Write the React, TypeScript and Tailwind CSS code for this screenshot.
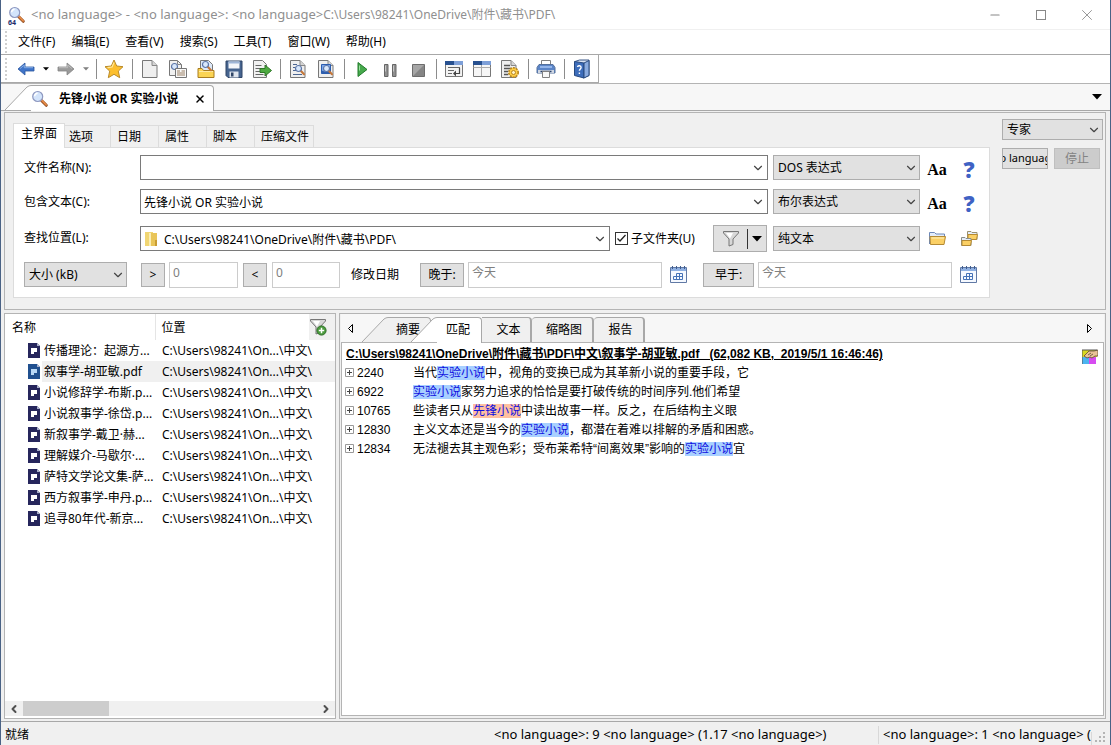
import type { ReactNode } from "react";
import { ChevronDown, ChevronLeft, ChevronRight, Minus, Square, X } from "lucide-react";

const RESULTS = [
  "传播理论：起源方...",
  "叙事学-胡亚敏.pdf",
  "小说修辞学-布斯.p...",
  "小说叙事学-徐岱.p...",
  "新叙事学-戴卫·赫...",
  "理解媒介-马歇尔·...",
  "萨特文学论文集-萨...",
  "西方叙事学-申丹.p...",
  "追寻80年代-新京...",
];

const MATCHES = [
  { line: 2240, before: "当代", hit: "实验小说", after: "中，视角的变换已成为其革新小说的重要手段，它" },
  { line: 6922, before: "", hit: "实验小说", after: "家努力追求的恰恰是要打破传统的时间序列.他们希望" },
  { line: 10765, before: "些读者只从", hit: "先锋小说", after: "中读出故事一样。反之，在后结构主义眼", alt: true },
  { line: 12830, before: "主义文本还是当今的", hit: "实验小说", after: "，都潜在着难以排解的矛盾和困惑。" },
  { line: 12834, before: "无法褪去其主观色彩；受布莱希特“间离效果”影响的", hit: "实验小说", after: "宜" },
];

const MENUS = ["文件(F)", "编辑(E)", "查看(V)", "搜索(S)", "工具(T)", "窗口(W)", "帮助(H)"];

type IconProps = { className?: string };

function Magnifier({ className = "" }: IconProps) {
  return (
    <svg viewBox="0 0 18 18" className={`h-[18px] w-[18px] ${className}`} aria-hidden="true">
      <path d="M10.5 10.5l4.8 4.8" stroke="#8e4a20" strokeWidth="3" strokeLinecap="round" />
      <path d="M10.8 10.4l4.4 4.4" stroke="#e58a45" strokeWidth="1.8" strokeLinecap="round" />
      <circle cx="6.7" cy="6.5" r="5" fill="#d3e4fb" stroke="#8e98c0" strokeWidth="1.2" />
      <path d="M3.6 6.2a3.2 3.2 0 0 1 3-2.9" stroke="#fff" strokeWidth="1.4" fill="none" />
    </svg>
  );
}

function Arrow({ flip, gray }: { flip?: boolean; gray?: boolean }) {
  return (
    <svg viewBox="0 0 18 14" className={flip ? "h-[14px] w-[18px] -scale-x-100" : "h-[14px] w-[18px]"} aria-hidden="true">
      <path d="M1 7l7-6v4h9v4H8v4z" fill={gray ? "#9a9a9a" : "#3f74c8"} stroke={gray ? "#858585" : "#2a569f"} strokeWidth=".8" strokeLinejoin="round" />
      <path d="M3 6.6l4.3-3.5v2.6H16" stroke={gray ? "#bcbcbc" : "#86aee6"} fill="none" />
    </svg>
  );
}

function Caret({ gray, big }: { gray?: boolean; big?: boolean }) {
  return (
    <svg viewBox="0 0 10 6" className={big ? "h-[6px] w-[10px]" : "h-[4px] w-[6px]"} aria-hidden="true">
      <path d="M0 0h10L5 5.5z" fill={gray ? "#808080" : "#000"} />
    </svg>
  );
}

function Icon20({ children }: { children: ReactNode }) {
  return (
    <svg viewBox="0 0 20 20" className="h-5 w-5" fill="none" aria-hidden="true">
      {children}
    </svg>
  );
}

function Page({ x = 2.5 }: { x?: number }) {
  return (
    <g transform={`translate(${x} 0)`}>
      <path d="M0 1.5h9.5l5 5v12H0z" fill="#efefef" stroke="#777" />
      <path d="M9.5 1.5v5h5" fill="#d5d5d5" stroke="#888" />
    </g>
  );
}

function SmallLens({ x, y }: { x: number; y: number }) {
  return (
    <g transform={`translate(${x} ${y})`}>
      <path d="M5.5 5.5l3.5 3.8" stroke="#c47639" strokeWidth="2" strokeLinecap="round" />
      <circle cx="3.5" cy="3.5" r="3" fill="#d9e8fc" stroke="#5c76a8" strokeWidth="1.2" />
    </g>
  );
}

function StarIcon() {
  return (
    <Icon20>
      <path d="M10 1l2.7 6 6.3.7-4.7 4.4 1.4 6.6L10 15.3l-5.7 3.4 1.4-6.6L1 7.7 7.3 7z" fill="#fdbf2d" stroke="#b98a2a" strokeLinejoin="round" />
      <path d="M10 3.5L8.1 8l-4.6.6" stroke="#ffe79b" strokeWidth="1.2" />
    </Icon20>
  );
}

function NewIcon() {
  return (
    <Icon20>
      <Page />
    </Icon20>
  );
}

function TemplateIcon() {
  return (
    <Icon20>
      <path d="M1.5 1.5h8l4 4v11h-12z" fill="#f1f1f1" stroke="#777" />
      <path d="M9.5 1.5v4h4" stroke="#888" />
      <SmallLens x={3} y={4} />
      <path d="M7.5 9.5h11v9h-11z" fill="#f8f8f8" stroke="#777" />
      <path d="M9 12h3M13.5 12H17M9 14h8M9 16h8" stroke="#9a8064" />
    </Icon20>
  );
}

function OpenIcon() {
  return (
    <Icon20>
      <path d="M4.5 1.5h8l4 4v9h-12z" fill="#dce8f8" stroke="#777" />
      <path d="M2 9.5h4l1.5 2H18v7H2z" fill="#fbd453" stroke="#a87c20" />
      <path d="M3 12.5h14" stroke="#ffeaa5" />
      <SmallLens x={6} y={2} />
    </Icon20>
  );
}

function SaveIcon() {
  return (
    <Icon20>
      <path d="M2 2h16v16.5H4l-2-2z" fill="#46648f" stroke="#2f4567" />
      <path d="M4.5 2.5h11v7h-11z" fill="#f4f6fa" />
      <path d="M4.5 2.5h11v2h-11z" fill="#9fb6d8" />
      <path d="M5.5 12.5h9v6h-9z" fill="#dfe5ee" />
      <path d="M7 13.5h2.5v4H7z" fill="#2f4567" />
    </Icon20>
  );
}

function ExportIcon() {
  return (
    <Icon20>
      <path d="M1.5 1.5h9l4 4v13h-13z" fill="#f1f1f1" stroke="#777" />
      <path d="M3.5 6.5h6M3.5 9.5h5M3.5 12.5h5M3.5 15.5h8" stroke="#666" strokeWidth="1.2" />
      <path d="M8 9.5h5V6l6.5 5.5L13 17v-3.5H8z" fill="#4daa40" stroke="#2f7528" />
    </Icon20>
  );
}

function PreviewIcon({ blue }: { blue?: boolean }) {
  return (
    <Icon20>
      <Page />
      {blue ? (
        <>
          <path d="M5.5 5.5h9v9h-9z" fill="#7fa9ea" stroke="#2b5db0" />
          <path d="M5.5 14.5v-3l3 1 6-1v3z" fill="#2f5fae" />
        </>
      ) : (
        <path d="M5 5.5h4M5 8.5h2M5 11.5h3M5 15.5h9" stroke="#4d6691" />
      )}
      <SmallLens x={7} y={6} />
    </Icon20>
  );
}

function PlayIcon() {
  return (
    <Icon20>
      <path d="M6 3.5v14l9-7z" fill="#46a94c" stroke="#217a2a" strokeLinejoin="round" />
      <path d="M7.5 6.5v5" stroke="#9be09f" />
    </Icon20>
  );
}

function PauseIcon() {
  return (
    <Icon20>
      <path d="M4.5 5.5H8v12H4.5zM12.5 5.5H16v12h-3.5z" fill="#8f8f8f" stroke="#666" />
      <path d="M5.5 6.5v6M13.5 6.5v6" stroke="#c8c8c8" />
    </Icon20>
  );
}

function StopIcon() {
  return (
    <Icon20>
      <path d="M4.5 5.5h12v12h-12z" fill="#858585" stroke="#6d6d6d" />
      <path d="M5 17V6h11z" fill="#a6a6a6" />
    </Icon20>
  );
}

function WrapIcon() {
  return (
    <Icon20>
      <path d="M1.5 2.5h17v15h-17z" fill="#f3f3f3" stroke="#777" />
      <path d="M1 2h9v4H1z" fill="#27508f" />
      <path d="M10 2h9v4h-9z" fill="#7d9fd8" />
      <path d="M4 8.5h12M4 11.5h6M4 14.5h4" stroke="#666" />
      <path d="M15.5 9v5.5H11" stroke="#444" strokeWidth="1.2" />
      <path d="M12 11.5v6l-3-3z" fill="#444" />
    </Icon20>
  );
}

function LayoutIcon() {
  return (
    <Icon20>
      <path d="M1.5 2.5h17v15h-17z" fill="#f6f6f6" stroke="#777" />
      <path d="M1 2h9v4H1z" fill="#27508f" />
      <path d="M10 2h9v4h-9z" fill="#7d9fd8" />
      <path d="M1.5 8.5h17M9.5 6v11" stroke="#aaa" />
    </Icon20>
  );
}

function SettingsIcon() {
  return (
    <Icon20>
      <Page x={1.5} />
      <path d="M4 6.5h6M4 9.5h7M4 12.5h4M4 15.5h4" stroke="#555" strokeWidth="1.3" />
      <circle cx="13.5" cy="13.5" r="4.7" fill="#ffcf45" stroke="#b9861f" strokeWidth="1.6" strokeDasharray="2 1" />
      <circle cx="13.5" cy="13.5" r="2" fill="#fff3c8" stroke="#b9861f" />
    </Icon20>
  );
}

function PrintIcon() {
  return (
    <Icon20>
      <path d="M5.5 1.5h9v6h-9z" fill="#fff" stroke="#808080" />
      <path d="M3 5.5h14l2 3V14H1V8.5z" fill="#5b85c8" stroke="#55709b" strokeLinejoin="round" />
      <path d="M2 11h16v3H2z" fill="#cfd6e2" />
      <path d="M4 8h12" stroke="#a6c6f6" strokeWidth="1.5" />
      <path d="M4.5 12.5h11" stroke="#27406d" strokeWidth="1.5" />
      <path d="M6.5 12.5h7v6h-7z" fill="#f8f8f8" stroke="#808080" />
    </Icon20>
  );
}

function BookIcon() {
  return (
    <Icon20>
      <path d="M3 2.5L7.5 1H17v15.5L11 19z" fill="#dbe4f3" stroke="#3a5687" />
      <path d="M2.5 2.5L12 4v15l-9.5-2.5z" fill="#3d6dbb" stroke="#27497f" />
      <path d="M12 4l5-2.5v15L12 19z" fill="#8aabdf" stroke="#27497f" />
      <path d="M5.5 8c.3-1.9 3.7-1.5 3.6.5 0 1.5-1.6 1.5-1.7 3.2M7.4 13.5V15" stroke="#fff" strokeWidth="1.4" />
    </Icon20>
  );
}

function Funnel({ add }: { add?: boolean }) {
  return (
    <svg viewBox="0 0 18 18" className="h-[18px] w-[18px]" fill="none" aria-hidden="true">
      <path d="M1.5 1.5h15V3L11 9v5.5L7 16V9L1.5 3z" fill="#d8d8d8" stroke="#777" strokeLinejoin="round" />
      <path d="M4 3h7L8 8.5z" fill="#fff" />
      {add && <circle cx="12.5" cy="12.5" r="4.6" fill="#4a9b3c" stroke="#2e6c27" />}
      {add && <path d="M12.5 9.8v5.4M9.8 12.5h5.4" stroke="#fff" strokeWidth="1.5" />}
    </svg>
  );
}

function CalendarIcon() {
  return (
    <svg viewBox="0 0 17 17" className="h-[17px] w-[17px]" fill="none" aria-hidden="true">
      <path d="M.5 1.5h16v15H.5z" fill="#f5f9ff" stroke="#6079a5" />
      <path d="M1 2h15v3H1z" fill="#8fb0e2" />
      <path d="M2.5 0v3M6.5 0v3M10.5 0v3M14.5 0v3" stroke="#3f5c8d" />
      <path d="M6.5 7.5h6v6h-9v-3h9M9.5 7.5v6M6.5 7.5v6" stroke="#4673b8" />
    </svg>
  );
}

function FolderIcon() {
  return (
    <svg viewBox="0 0 17 17" className="h-[17px] w-[17px]" fill="none" aria-hidden="true">
      <path d="M.5 14V2.5h5L7 4h8.5v5H.5z" fill="#e3ecfa" stroke="#6d88b8" />
      <path d="M1 6.5h15.5l-1.5 8H1.5z" fill="#fbd065" stroke="#b48a34" strokeLinejoin="round" />
      <path d="M2.5 8H15" stroke="#fff0bb" />
    </svg>
  );
}

function FoldersIcon() {
  return (
    <svg viewBox="0 0 17 17" className="h-[17px] w-[17px]" fill="none" aria-hidden="true">
      <path d="M6.5 1.5H10l1 1h5v7H6.5z" fill="#e3ecfa" stroke="#9a9170" />
      <path d="M7 4.5h9.500l-1 5H7z" fill="#fbd065" stroke="#b48a34" />
      <path d="M.5 7.5H4l1 1h5v7H.5z" fill="#e3ecfa" stroke="#8c8f88" />
      <path d="M1 10.5h9.5l-1 5H1z" fill="#fbd065" stroke="#b48a34" />
    </svg>
  );
}

function YellowFolder() {
  return (
    <svg viewBox="0 0 14 16" className="h-4 w-[14px] shrink-0" aria-hidden="true">
      <path d="M1 1h8v14H1z" fill="#f1d673" />
      <path d="M5 2h8v13H5z" fill="#e9c559" />
      <path d="M5 2h2v13H5z" fill="#fbeeb5" />
      <path d="M11 9h2v6h-2z" fill="#c99d34" />
    </svg>
  );
}

function PdfIcon({ active }: { active: boolean }) {
  return (
    <svg viewBox="0 0 12 15" className="h-[15px] w-3 shrink-0" aria-hidden="true">
      <path d="M0 0h9l3 3v12H0z" fill={active ? "#20508f" : "#26265c"} />
      <path d="M9 0v3h3z" fill="#a9b0cc" />
      <path d="M3 5h6v4H6v2H3z" fill={active ? "#b9d8f5" : "#fff"} />
    </svg>
  );
}

function PaletteIcon() {
  return (
    <svg viewBox="0 0 16 16" className="h-4 w-4" aria-hidden="true">
      <path d="M0 1h15v7H0z" fill="#d8d820" />
      <path d="M0 8h7v7H0z" fill="#4cb4f0" />
      <path d="M7 8h7v7H7z" fill="#d64cf0" />
      <path d="M2 7l5-5h5l4-1v6h-3l-3 2-2-1-3 1z" fill="#e8c496" stroke="#5f4630" strokeWidth=".8" />
      <path d="M6 6l3-2M8 7l3-2" stroke="#5f4630" strokeWidth=".8" />
      <path d="M0 1h15M0 15V1" stroke="#555" />
    </svg>
  );
}

function ToolButton({ label, children }: { label: string; children: ReactNode }) {
  return (
    <button type="button" aria-label={label} className="flex h-full w-7 shrink-0 items-center justify-center">
      {children}
    </button>
  );
}

function Separator() {
  return (
    <div className="flex h-5 w-2 shrink-0 justify-center">
      <div className="w-px bg-[#8c8c8c]" />
    </div>
  );
}

function Grip() {
  return <div className="mr-[5px] ml-1 h-[22px] w-0 shrink-0 border-l-2 border-dotted border-[#cfcfcf]" />;
}

function Chevron() {
  return <ChevronDown className="h-[14px] w-[14px] text-[#444]" strokeWidth={2} />;
}

function GraySelect({ label, value, className }: { label: string; value: string; className: string }) {
  return (
    <div className={`relative shrink-0 ${className}`}>
      <select aria-label={label} className="h-full w-full appearance-none border border-[#adadad] bg-[#e1e1e1] px-1">
        <option>{value}</option>
      </select>
      <span className="pointer-events-none absolute inset-y-0 right-[2px] flex items-center">
        <Chevron />
      </span>
    </div>
  );
}

function ComboBox({ id, value, icon }: { id: string; value?: string; icon?: ReactNode }) {
  return (
    <div className="flex h-full min-w-0 flex-1 items-center border border-[#7a7a7a] bg-white pl-[3px]">
      {icon}
      <input id={id} defaultValue={value} className="h-full min-w-0 flex-1 outline-none" />
      <button type="button" aria-label="展开" className="flex h-full w-4 shrink-0 items-center">
        <Chevron />
      </button>
    </div>
  );
}

function GrayButton({ className, children }: { className: string; children: ReactNode }) {
  return (
    <button type="button" className={`h-[24px] shrink-0 border border-[#adadad] bg-[#e1e1e1] ${className}`}>
      {children}
    </button>
  );
}

function RowIcons({ first, second }: { first: ReactNode; second: ReactNode }) {
  return (
    <div className="mr-1 ml-px flex h-full w-16 shrink-0 items-center">
      <div className="flex w-8 justify-center">{first}</div>
      <div className="flex w-8 justify-center">{second}</div>
    </div>
  );
}

function CaseAndHelp() {
  return (
    <RowIcons
      first={<button type="button" className="pt-1 font-['Liberation_Serif',serif] text-base font-bold">Aa</button>}
      second={<button type="button" className="pt-1 font-['Open_Sans',sans-serif] text-[22px] font-extrabold text-[#3f62c4]">?</button>}
    />
  );
}

function SearchForm() {
  const tabs = ["选项", "日期", "属性", "脚本", "压缩文件"];
  const tabWidths = ["w-[46px] pl-1", "w-12 pl-[6px]", "w-12 pl-[6px]", "w-12 pl-[6px]", "w-[59px] pl-[6px]"];

  return (
    <section className="flex border border-[#b4b4b4] bg-[#f0f0f0] pt-[6px] pr-[2px] pb-[11px] pl-2">
      <div className="min-w-0 flex-1 pt-1">
        <div className="flex items-end">
          <button type="button" className="relative z-10 -mb-px h-[25px] w-[52px] border border-b-0 border-[#dcdcdc] bg-white pb-1">主界面</button>
          {tabs.map((tab, i) => (
            <button key={tab} type="button" className={`h-[22px] border border-b-0 border-l-0 border-[#dcdcdc] text-left whitespace-nowrap ${tabWidths[i]}`}>
              {tab}
            </button>
          ))}
        </div>
        <div className="border border-[#dcdcdc] bg-white pt-[7px] pb-[10px] pl-[10px]">
          <div className="flex h-[25px] items-center">
            <label htmlFor="name" className="w-[116px] shrink-0">文件名称(N):</label>
            <ComboBox id="name" />
            <GraySelect label="表达式类型" value="DOS 表达式" className="ml-[5px] h-[25px] w-[147px]" />
            <CaseAndHelp />
          </div>
          <div className="mt-[9px] flex h-[25px] items-center">
            <label htmlFor="text" className="w-[116px] shrink-0">包含文本(C):</label>
            <ComboBox id="text" value="先锋小说 OR 实验小说" />
            <GraySelect label="文本表达式类型" value="布尔表达式" className="ml-[5px] h-[25px] w-[147px]" />
            <CaseAndHelp />
          </div>
          <div className="mt-3 flex h-[25px] items-center">
            <label htmlFor="location" className="w-[116px] shrink-0 pb-[2px]">查找位置(L):</label>
            <ComboBox id="location" value="C:\Users\98241\OneDrive\附件\藏书\PDF\" icon={<div className="mr-[6px]"><YellowFolder /></div>} />
            <label className="ml-[5px] flex w-[98px] shrink-0 items-center gap-[3px] whitespace-nowrap">
              <input type="checkbox" defaultChecked className="peer sr-only" />
              <span className="flex h-[13px] w-[13px] items-center justify-center border border-[#333] bg-white">
                <svg viewBox="0 0 11 11" className="h-[11px] w-[11px]" aria-hidden="true">
                  <path d="M1.5 5.5L4 8l5.5-6" fill="none" stroke="#222" strokeWidth="1.3" />
                </svg>
              </span>
              子文件夹(U)
            </label>
            <div className="flex h-[27px] w-[54px] shrink-0 items-center border border-[#adadad] bg-[#e1e1e1]">
              <button type="button" aria-label="筛选" className="flex flex-1 justify-center">
                <Funnel />
              </button>
              <div className="h-5 w-px bg-[#333]" />
              <button type="button" aria-label="筛选选项" className="flex w-[18px] justify-center">
                <Caret big />
              </button>
            </div>
            <GraySelect label="格式" value="纯文本" className="ml-[6px] h-[25px] w-[147px]" />
            <RowIcons
              first={<button type="button" aria-label="浏览"><FolderIcon /></button>}
              second={<button type="button" aria-label="多个文件夹"><FoldersIcon /></button>}
            />
          </div>
          <div className="mt-[11px] flex h-[25px] items-center">
            <GraySelect label="大小" value="大小 (kB)" className="h-[25px] w-[103px]" />
            <GrayButton className="ml-[14px] w-6">&gt;</GrayButton>
            <input aria-label="大于" placeholder="0" className="ml-1 h-[26px] w-[69px] border border-[#ccc] px-[3px] pb-1 placeholder:text-[#808080]" />
            <GrayButton className="ml-[5px] w-6">&lt;</GrayButton>
            <input aria-label="小于" placeholder="0" className="ml-[5px] h-[26px] w-[68px] border border-[#ccc] px-[3px] pb-1 placeholder:text-[#808080]" />
            <span className="ml-[11px] w-[69px] shrink-0">修改日期</span>
            <GrayButton className="w-[44px]">晚于:</GrayButton>
            <input aria-label="晚于日期" placeholder="今天" className="ml-1 h-[26px] min-w-0 flex-1 border border-[#ccc] px-[3px] pb-1 placeholder:text-[#808080]" />
            <button type="button" aria-label="选择日期" className="mx-2"><CalendarIcon /></button>
            <GrayButton className="ml-2 w-[51px]">早于:</GrayButton>
            <input aria-label="早于日期" placeholder="今天" className="ml-1 h-[26px] min-w-0 flex-1 border border-[#ccc] px-[3px] pb-1 placeholder:text-[#808080]" />
            <button type="button" aria-label="选择日期" className="mr-3 ml-2"><CalendarIcon /></button>
          </div>
        </div>
      </div>
      <div className="ml-3 w-[101px] shrink-0">
        <GraySelect label="模式" value="专家" className="h-[21px] w-[101px]" />
        <div className="mt-2 flex justify-between pr-[3px]">
          <button type="button" className="flex h-[21px] w-[46px] items-center justify-center overflow-hidden border border-[#adadad] bg-[#e1e1e1] text-[11px] whitespace-nowrap">
            &lt;no language&gt;
          </button>
          <button type="button" disabled className="h-[21px] w-[46px] border border-[#bfbfbf] bg-[#ccc] text-[#838383]">停止</button>
        </div>
      </div>
    </section>
  );
}

function FileList() {
  return (
    <section className="flex w-[332px] shrink-0 flex-col border border-[#b4b4b4] bg-white">
      <div className="flex-1">
        <table className="w-full table-fixed border-collapse text-left">
          <thead>
            <tr className="h-[26px]">
              <th className="w-[150px] border-r border-[#e5e5e5] pt-px pl-[7px] font-normal">名称</th>
              <th className="pt-px pl-[6px] font-normal">位置</th>
              <th className="w-[26px] bg-[#f0f0f0] font-normal">
                <button type="button" aria-label="添加筛选" className="flex w-full"><Funnel add /></button>
              </th>
            </tr>
          </thead>
          <tbody>
            {RESULTS.map((name, i) => (
              <tr key={name} className="h-[21px]">
                <td className="whitespace-nowrap">
                  <div className="flex h-[21px] items-center pl-[23px]">
                    <PdfIcon active={i === 1} />
                    <span className={i === 1 ? "ml-[2px] h-[21px] flex-1 bg-[#f0f0f0] pl-[2px] leading-[21px]" : "pl-1"}>{name}</span>
                  </div>
                </td>
                <td colSpan={2} className={i === 1 ? "bg-[#f0f0f0] pl-[7px]" : "pl-[7px]"}>
                  C:\Users\98241\On...\中文\
                </td>
              </tr>
            ))}
          </tbody>
        </table>
      </div>
      <div className="mb-[2px] flex h-[15px] items-center bg-[#f0f0f0]">
        <button type="button" aria-label="向左滚动" className="flex w-[18px] justify-center"><ChevronLeft className="h-3 w-3 text-[#505050]" strokeWidth={4} /></button>
        <div className="h-[15px] w-[86px] bg-[#cdcdcd]" />
        <div className="flex-1" />
        <button type="button" aria-label="向右滚动" className="flex w-[18px] justify-center"><ChevronRight className="h-3 w-3 text-[#505050]" strokeWidth={4} /></button>
      </div>
    </section>
  );
}

// slanted left edge shared by the document tab and the viewer tabs
function Slant({ active }: { active?: boolean }) {
  return (
    <svg viewBox="0 0 26 25" className="h-[25px] w-[26px] shrink-0" aria-hidden="true">
      <path d="M0 25L22 2Q24 .5 26 .5V25z" fill={active ? "#fff" : "#f0f0f0"} />
      <path d="M0 25L22 2Q24 .5 26 .5" fill="none" stroke="#a8a8a8" />
    </svg>
  );
}

function Viewer() {
  return (
    <section className="flex min-w-0 flex-1 flex-col border border-[#b4b4b4] bg-[#f0f0f0] px-px pb-[2px]">
      <div className="flex h-7 shrink-0 items-end bg-[#f7f7f7]">
        <button type="button" aria-label="上一个标签" className="flex h-full w-[21px] items-center pl-[6px]">
          <svg viewBox="0 0 7 9" className="h-[9px] w-[7px]" aria-hidden="true"><path d="M5.5 .5v8l-4-4z" fill="none" stroke="#000" /></svg>
        </button>
        <button type="button" className="flex h-[25px]">
          <Slant />
          <span className="h-full w-[43px] rounded-tr border-t border-r border-[#a8a8a8] bg-[#f0f0f0] pl-2 text-left leading-6">摘要</span>
        </button>
        <button type="button" className="relative z-10 -mb-px -ml-5 flex h-[26px]">
          <Slant active />
          <span className="h-full w-[45px] rounded-tr border-t border-r border-[#a8a8a8] bg-white pl-[9px] text-left leading-6">匹配</span>
        </button>
        <button type="button" className="h-[25px] w-[50px] rounded-tr border-t border-r-2 border-[#a8a8a8] bg-[#f0f0f0] pl-[5px]">文本</button>
        <button type="button" className="h-[25px] w-[62px] rounded-t border-t border-r-2 border-[#a8a8a8] bg-[#f0f0f0] pl-1">缩略图</button>
        <button type="button" className="h-[25px] w-[51px] rounded-t border-t border-r-2 border-[#a8a8a8] bg-[#f0f0f0] pl-1">报告</button>
        <div className="flex-1" />
        <button type="button" aria-label="下一个标签" className="mr-[11px] flex h-full items-center">
          <svg viewBox="0 0 7 9" className="h-[9px] w-[7px]" aria-hidden="true"><path d="M1.5 .5v8l4-4z" fill="none" stroke="#000" /></svg>
        </button>
      </div>
      <div className="flex-1 border border-[#b4b4b4] bg-white pt-[2px] pl-[3px] font-['Liberation_Sans','Noto_Sans_CJK_SC',sans-serif]">
        <div className="flex h-[18px] items-center justify-between pr-[5px]">
          <h2 className="pl-px leading-[18px] font-bold whitespace-pre underline">
            {"C:\\Users\\98241\\OneDrive\\附件\\藏书\\PDF\\中文\\叙事学-胡亚敏.pdf   (62,082 KB,  2019/5/1 16:46:46)"}
          </h2>
          <button type="button" aria-label="颜色" className="mt-[6px]"><PaletteIcon /></button>
        </div>
        {MATCHES.map(({ line, before, hit, after, alt }) => (
          <div key={line} className="flex h-[19px] items-center whitespace-nowrap">
            <button type="button" aria-label="展开匹配" className="mr-[3px]">
              <svg viewBox="0 0 9 9" className="h-[9px] w-[9px]" aria-hidden="true">
                <path d="M.5.5h8v8h-8z" fill="#fff" stroke="#999" />
                <path d="M2 4.5h5M4.5 2v5" stroke="#444" />
              </svg>
            </button>
            <span className="w-14">{line}</span>
            <p>
              {before}
              <mark className={alt ? "bg-[#ffc0a0] text-[#1010e0]" : "bg-[#a8d0ff] text-[#1010e0]"}>{hit}</mark>
              {after}
            </p>
          </div>
        ))}
      </div>
    </section>
  );
}

function Toolbar() {
  return (
    <div className="flex h-7 w-[598px] items-center border-r border-b border-[#a8a8a8] bg-white">
      <Grip />
      <ToolButton label="后退"><Arrow /></ToolButton>
      <button type="button" aria-label="后退历史" className="flex w-3 justify-center"><Caret /></button>
      <ToolButton label="前进"><Arrow flip gray /></ToolButton>
      <button type="button" aria-label="前进历史" className="flex w-3 justify-center"><Caret gray /></button>
      <Separator />
      <ToolButton label="收藏"><StarIcon /></ToolButton>
      <Separator />
      <ToolButton label="新建"><NewIcon /></ToolButton>
      <ToolButton label="模板"><TemplateIcon /></ToolButton>
      <ToolButton label="打开"><OpenIcon /></ToolButton>
      <ToolButton label="保存"><SaveIcon /></ToolButton>
      <ToolButton label="导出"><ExportIcon /></ToolButton>
      <Separator />
      <ToolButton label="查找文本"><PreviewIcon /></ToolButton>
      <ToolButton label="查找图片"><PreviewIcon blue /></ToolButton>
      <Separator />
      <ToolButton label="开始"><PlayIcon /></ToolButton>
      <ToolButton label="暂停"><PauseIcon /></ToolButton>
      <ToolButton label="停止"><StopIcon /></ToolButton>
      <Separator />
      <ToolButton label="自动换行"><WrapIcon /></ToolButton>
      <ToolButton label="布局"><LayoutIcon /></ToolButton>
      <ToolButton label="配置"><SettingsIcon /></ToolButton>
      <Separator />
      <ToolButton label="打印"><PrintIcon /></ToolButton>
      <Separator />
      <ToolButton label="帮助"><BookIcon /></ToolButton>
    </div>
  );
}

export default function App() {
  return (
    <div className="flex h-screen flex-col overflow-hidden border-x border-[#4a6285] bg-[#f0f0f0] font-['Noto_Sans','Noto_Sans_CJK_SC',sans-serif] text-xs text-black">
      <header className="flex h-[29px] shrink-0 items-center bg-white pl-[7px]">
        <div className="relative">
          <Magnifier />
          <span className="absolute -bottom-[3px] left-0 text-[7px] leading-[8px] font-bold text-[#1b2b6b]">64</span>
        </div>
        <h1 className="ml-[5px] flex-1 whitespace-nowrap text-[#8f8f8f]">
          <span className="text-[13px]">&lt;no language&gt; - &lt;no language&gt;: &lt;no language&gt;</span>
          {"C:\\Users\\98241\\OneDrive\\附件\\藏书\\PDF\\"}
        </h1>
        <button type="button" aria-label="最小化" className="flex w-[46px] justify-center text-[#888]"><Minus className="h-[14px] w-[14px]" strokeWidth={2} /></button>
        <button type="button" aria-label="最大化" className="flex w-[46px] justify-center">
          <span className="h-[10px] w-[10px] border border-[#888]" />
        </button>
        <button type="button" aria-label="关闭" className="flex w-[46px] justify-center text-[#777]"><X className="h-[18px] w-[18px]" strokeWidth={1} /></button>
      </header>
      <nav className="flex h-[26px] shrink-0 items-center border-t border-b border-t-[#f0f0f0] border-b-[#a8a8a8] bg-white">
        <Grip />
        <div className="flex gap-4 pl-[6px]">
          {MENUS.map(menu => (
            <button key={menu} type="button">{menu}</button>
          ))}
        </div>
      </nav>
      <div className="shrink-0 border-b border-[#b4b4b4] bg-white">
        <Toolbar />
      </div>
      <div className="flex h-[27px] shrink-0 items-end border-b border-[#a8a8a8] bg-[#f7f7f7] pl-1">
        <div className="-mb-px flex h-[26px]">
          <Slant active />
          <div className="flex w-[183px] items-center rounded-tr border-t border-r border-[#a8a8a8] bg-white">
            <Magnifier />
            <button type="button" className="ml-[10px] font-bold whitespace-nowrap">先锋小说 OR 实验小说</button>
            <button type="button" aria-label="关闭标签" className="ml-[15px]"><X className="h-3 w-3" strokeWidth={3} /></button>
          </div>
        </div>
        <div className="flex-1" />
        <button type="button" aria-label="标签列表" className="mr-2 flex h-full items-center"><Caret big /></button>
      </div>
      <main className="flex min-h-0 flex-1 flex-col gap-[3px] pt-px pr-1 pb-[2px] pl-[3px]">
        <SearchForm />
        <div className="flex min-h-0 flex-1 gap-[3px]">
          <FileList />
          <Viewer />
        </div>
      </main>
      <footer className="flex h-6 shrink-0 items-center border-t border-[#a8a8a8] pt-[3px] text-[13px] whitespace-nowrap">
        <span className="flex-1 pl-1 text-xs">就绪</span>
        <span className="w-[384px]">&lt;no language&gt;: 9 &lt;no language&gt; (1.17 &lt;no language&gt;)</span>
        <span className="w-[213px] overflow-hidden border-l border-[#d8d8d8] pl-1">&lt;no language&gt;: 1 &lt;no language&gt; (</span>
        <span className="flex w-[19px] justify-center self-end border-l border-[#d8d8d8] pb-px">
          <svg viewBox="0 0 12 12" className="h-3 w-3" fill="#b4b4b4" aria-hidden="true">
            <path d="M8 0h2v2H8zM8 4h2v2H8zM4 4h2v2H4zM8 8h2v2H8zM4 8h2v2H4zM0 8h2v2H0z" />
          </svg>
        </span>
      </footer>
    </div>
  );
}
